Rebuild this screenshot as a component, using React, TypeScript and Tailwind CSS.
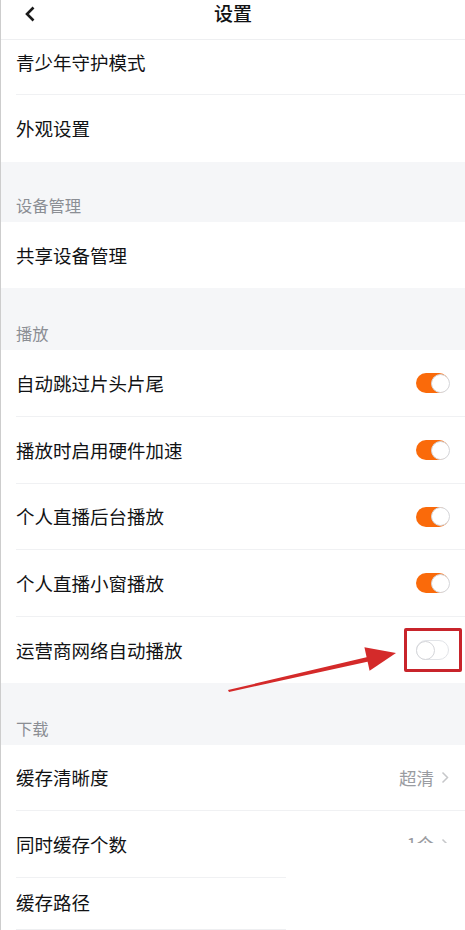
import React from "react";

interface SettingRow {
  id: string;
  label: string;
  toggle?: boolean;
  on?: boolean;
  value?: string;
  h: string;
}

const CJK = { fontFamily: '"Noto Sans CJK SC", "Noto Sans", sans-serif' };

function Toggle({ on }: { on: boolean }) {
  return (
    <div
      className={`relative w-[33px] h-[20px] rounded-full ${
        on ? "bg-[#fa6a0a]" : "bg-white border border-[#e2e4e8]"
      }`}
    >
      <div
        className={`absolute w-[19px] h-[19px] rounded-full bg-white border border-[#d4d5d9] ${
          on ? "right-[-1px] top-[0.5px]" : "left-[-1px] top-[-0.5px]"
        }`}
      />
    </div>
  );
}

function Row({ row, divider }: { row: SettingRow; divider: boolean }) {
  return (
    <div className={`bg-white pl-[15px] ${row.h}`}>
      <div
        className={`h-full flex items-center justify-between pr-4 ${
          divider ? "border-b border-[#f0f1f3]" : ""
        }`}
      >
        <span className="text-[18.5px] text-[#111214] leading-none">
          {row.label}
        </span>
        {row.toggle && <Toggle on={!!row.on} />}
        {row.value && (
          <span className="flex items-center gap-[7px] text-[17.5px] text-[#9a9ca1] leading-none">
            {row.value}
            <svg width="8" height="13" viewBox="0 0 8 13" fill="none">
              <path d="M1.5 1.5 L6.5 6.5 L1.5 11.5" stroke="#c6c7ca" strokeWidth="1.5" />
            </svg>
          </span>
        )}
      </div>
    </div>
  );
}

function SectionLabel({ text, h }: { text: string; h: string }) {
  return (
    <div className={`bg-[#f5f6f8] pl-[15px] flex items-end pb-[8px] ${h}`}>
      <span className="text-[16.3px] text-[#8b8e94] leading-[18px]">{text}</span>
    </div>
  );
}

const PLAY_ROWS: SettingRow[] = [
  { id: "skip", label: "自动跳过片头片尾", toggle: true, on: true, h: "h-[67px]" },
  { id: "hw", label: "播放时启用硬件加速", toggle: true, on: true, h: "h-[67px]" },
  { id: "bg", label: "个人直播后台播放", toggle: true, on: true, h: "h-[66px]" },
  { id: "pip", label: "个人直播小窗播放", toggle: true, on: true, h: "h-[67px]" },
  { id: "cell", label: "运营商网络自动播放", toggle: true, on: false, h: "h-[66px]" },
];

export default function App() {
  return (
    <div
      className="relative w-[465px] h-[930px] overflow-hidden bg-white border-l border-[#cdcdcd]"
      style={CJK}
    >
      {/* Header */}
      <div className="relative h-[40px] flex items-start justify-center pt-[3px] border-b border-[#eeeff1]">
        <svg
          className="absolute left-[23px] top-[6px]"
          width="12"
          height="16"
          viewBox="0 0 12 16"
          fill="none"
        >
          <path d="M9.5 1.5 L3 8 L9.5 14.5" stroke="#1a1a1a" strokeWidth="2.6" />
        </svg>
        <span className="text-[19px] font-medium text-[#111214] leading-[20px]">
          设置
        </span>
      </div>

      {/* General */}
      <div className="bg-white pl-[15px] h-[55px]">
        <div className="h-full flex items-center pb-[10px] border-b border-[#f0f1f3]">
          <span className="text-[18.5px] text-[#111214] leading-none">青少年守护模式</span>
        </div>
      </div>
      <Row row={{ id: "look", label: "外观设置", h: "h-[67px]" }} divider={false} />

      <SectionLabel text="设备管理" h="h-[60px]" />
      <Row row={{ id: "share", label: "共享设备管理", h: "h-[66px]" }} divider={false} />

      <SectionLabel text="播放" h="h-[62px]" />
      {PLAY_ROWS.map((row, i) => (
        <Row key={row.id} row={row} divider={i < PLAY_ROWS.length - 1} />
      ))}

      <SectionLabel text="下载" h="h-[62px]" />
      <Row row={{ id: "quality", label: "缓存清晰度", value: "超清", h: "h-[66px]" }} divider />
      <Row row={{ id: "count", label: "同时缓存个数", value: "1个", h: "h-[67px]" }} divider />
      <div className="bg-white pl-[15px] h-[52px]">
        <div className="h-full flex items-center pb-[2px] border-b border-[#eeeff1]">
          <span className="text-[18.5px] text-[#111214] leading-none">缓存路径</span>
        </div>
      </div>

      {/* white patch pasted over the lower right corner */}
      <div className="absolute left-[285px] top-[843px] w-[180px] h-[87px] bg-white" />

      {/* Annotation box */}
      <div className="absolute left-[403px] top-[628px] w-[58px] h-[44px] border-[3px] border-[#c8242b] rounded-[2px]" />

      {/* Annotation arrow */}
      <svg
        className="absolute left-0 top-0 pointer-events-none"
        width="465"
        height="930"
        viewBox="0 0 465 930"
      >
        <path d="M227 690 L366.5 657 L367.5 661.5 L228 692 Z" fill="#d42a2a" />
        <path d="M395 653 L363.4 647.3 L368.6 670.7 Z" fill="#d42a2a" />
      </svg>
    </div>
  );
}
